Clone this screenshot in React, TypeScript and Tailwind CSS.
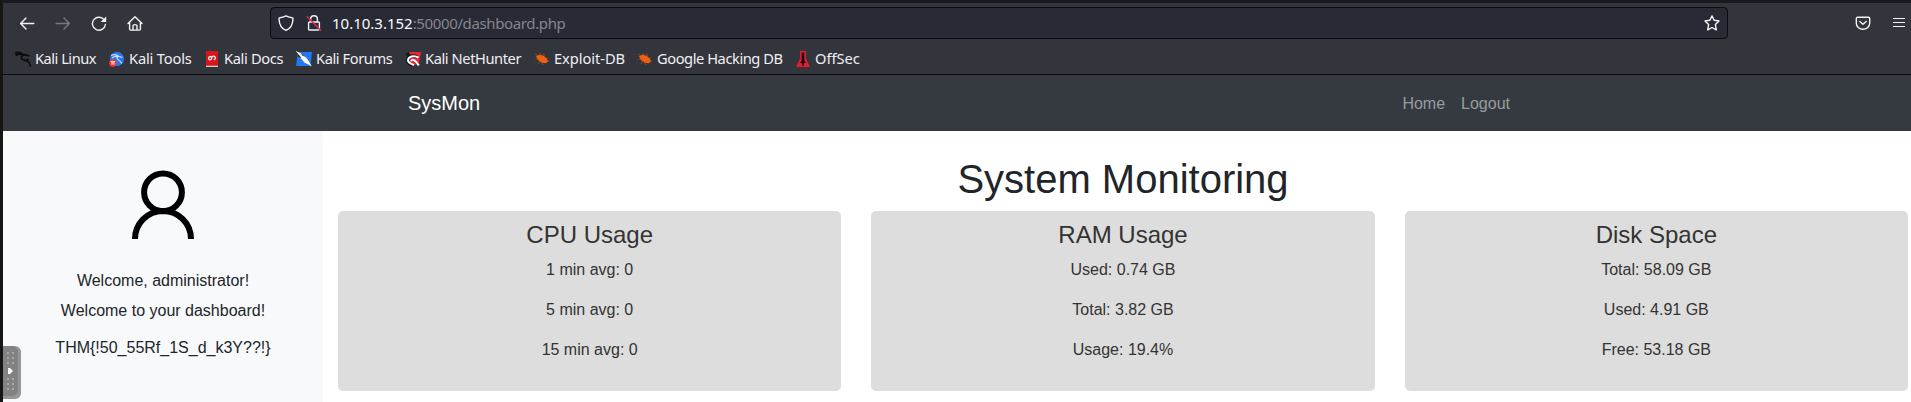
import React from "react";

const stroke = { fill: "none", stroke: "#f2f2f4", strokeWidth: 1.4, strokeLinecap: "round", strokeLinejoin: "round" } as const;

function BackIcon() {
  return (
    <svg className="h-4 w-4" viewBox="0 -0.5 16 16" {...stroke}>
      <path d="M14.8 8H1.6M7 2.6 1.6 8 7 13.4" />
    </svg>
  );
}

function ForwardIcon() {
  return (
    <svg className="h-4 w-4" viewBox="0 -0.5 16 16" {...stroke} stroke="#77797f">
      <path d="M1.2 8h13.2M9 2.6 14.4 8 9 13.4" />
    </svg>
  );
}

function ReloadIcon() {
  return (
    <svg className="h-4 w-4" viewBox="0 -0.5 16 16" {...stroke}>
      <path d="M13.5 4.800A6.500 6.500 0 1 0 14.400 9" />
      <path d="M15.200 1v5.500H9.700z" fill="#f2f2f4" stroke="none" />
    </svg>
  );
}

function HomeIcon() {
  return (
    <svg className="h-4 w-4" viewBox="0 -0.5 16 16" {...stroke}>
      <path d="M1 8 8 1.2 15 8M2.6 6.800v6.800q0 1 1 1h8.800q1 0 1-1V6.800M6 14.500v-4.200q0-1.200 2-1.200t2 1.200v4.200" />
    </svg>
  );
}

function ShieldIcon() {
  return (
    <svg className="h-4 w-4" viewBox="0 0 16 16" {...stroke}>
      <path d="M8 .9c2 1 4.200 1.700 6.200 1.900.500 0 .800.400.800.900C14.800 9.500 12.600 13.600 8 15.400 3.400 13.600 1.200 9.500 1 3.700c0-.5.300-.9.800-.9C3.800 2.600 6 1.900 8 .9z" />
    </svg>
  );
}

function InsecureIcon() {
  return (
    <svg className="h-4 w-4" viewBox="0 0 16 16" {...stroke}>
      <path d="M4.600 7V4.200a3.400 3.400 0 0 1 6.800 0V7M3.600 7h8.800q1 0 1 1v6q0 1-1 1H3.600q-1 0-1-1V8q0-1 1-1z" />
      <path d="M1.200 1.700 14.600 15.300" stroke="#e22850" strokeWidth="1.500" />
    </svg>
  );
}

function StarIcon() {
  return (
    <svg className="h-4 w-4" viewBox="0 0 16 16" {...stroke}>
      <path d="M8 .9 10.100 5.300 15 6 11.400 9.600 12.300 14.900 8 12.500 3.700 14.900 4.600 9.600 1 6 5.900 5.300z" />
    </svg>
  );
}

function PocketIcon() {
  return (
    <svg className="h-4 w-4" viewBox="0 0 16 16" {...stroke}>
      <path d="M2.600 2.300h10.800q1.300 0 1.300 1.300V8a6.700 6.300 0 0 1-13.400 0V3.600Q1.300 2.300 2.600 2.300zM4.800 6.400 8 9.300l3.200-2.900" />
    </svg>
  );
}

function MenuIcon() {
  return (
    <svg className="h-4 w-3" viewBox="0 0 12 16" shapeRendering="crispEdges" fill="#f2f2f4">
      <path d="M0 3h12v1H0zM0 7h12v1H0zM0 11h12v1H0z" />
    </svg>
  );
}

function DragonIcon() {
  return (
    <svg className="h-4 w-4" viewBox="0 0 16 16" fill="none" stroke="#0b0b0d" strokeLinecap="round">
      <path d="M.7 1.300C4 .9 7 2 9 4.100M1 4.500C3.500 2.700 6 3 8.500 4M.8 3 4 2.500" strokeWidth="1.300" />
      <path d="M8.500 3.800 10.300 3.600 13.500 4.800M8.500 4.200C5.500 5.200 5.600 8.200 8.600 8.900 12.500 9.700 14.500 10.500 15.300 14.900M10.800 9.500 12.900 8.500" strokeWidth="1.700" />
    </svg>
  );
}

function ToolsIcon() {
  return (
    <svg className="h-4 w-4" viewBox="0 0 16 16" fill="none">
      <circle cx="8" cy="7.900" r="7.100" fill="#2777f2" />
      <path d="M2 4.500C5 3 8 3.800 10 5.500L13.500 6.300M3 7C6 4.500 8 5.500 9.500 6M8.300 6.300C6.800 8.300 11 8.700 12.800 12.600" stroke="#cfe0fb" strokeWidth="1.200" />
      <circle cx="3.900" cy="12" r="3.700" fill="#f23b36" />
      <path d="M1.800 10.700h4.200M3.100 10.700v3M4.900 10.700v3" stroke="#fff" strokeWidth=".9" />
    </svg>
  );
}

function DocsIcon() {
  return (
    <svg className="h-4 w-4" viewBox="0 0 16 16" fill="none">
      <path d="M2 0h12v16H2z" fill="#d9141c" />
      <path d="M2 14.700h12V16H2z" fill="#d7c9c9" />
      <path d="M6.300 5.200C3.800 6 4.300 9.300 6.300 8.900 8.300 8.500 7 5.500 9 5.200 11.700 4.900 12.300 8 9.800 8.900M6.300 5.200 7.300 6.300" stroke="#fff" strokeWidth="1.200" />
    </svg>
  );
}

function ForumsIcon() {
  return (
    <svg className="h-4 w-4" viewBox="0 0 16 16">
      <path d="M2 1h14l-1.500 14H0z" fill="#2379f4" />
      <path d="M0 0 5 2.500 10.500 7 13 10.500 15.800 15.500 12 13.200 8.500 11.800 6 8.500 2 5z" fill="#fff" />
      <path d="M0 .5 5.500 7 2.500 6.200zM6 4.200l3 1.600-3.800-3.600z" fill="#16181d" />
    </svg>
  );
}

function NetHunterIcon() {
  return (
    <svg className="h-4 w-4" viewBox="0 0 16 16" fill="none">
      <path d="M4 1h12l-2.200 12.500H5z" fill="#ee2532" />
      <path d="M2 2 5 6M12 5.700C7 4 2.600 6 2.600 9.300c0 2.700 2.500 4.200 4.600 4.500" stroke="#16181d" strokeWidth="3.600" />
      <path d="M13.500 6.600C9 3.800 3.300 5.600 3 9c-.2 3 4 3.900 6 5.300M6 10C7.500 7.600 10.200 8.500 13.800 14.500" stroke="#fff" strokeWidth="2" />
    </svg>
  );
}

function BugIcon() {
  return (
    <svg className="h-4 w-4" viewBox="0 0 16 16" fill="none">
      <path d="M1 3 4 5M6 2l1 3M10 2.500v3M14 7l-3 1M15 10h-4M4 13l2-3M9 14l-1-3M1.500 8H5" stroke="#a64b20" strokeWidth=".8" />
      <path d="M2 5.300 5.300 3.800 9.500 4.800 12.500 7.300 14 10.200 12 12.300 7.800 11.700 4 9z" fill="#f1600f" />
    </svg>
  );
}

function OffSecIcon() {
  return (
    <svg className="h-4 w-4" viewBox="0 0 16 16">
      <path d="M5 0h6v7.500L15 16H1l4-8.500z" fill="#e31e2a" />
      <path d="M6.600 1.500h2.800V10L11 11.500 8.700 12.500V15H7.300v-2.500L5 11.500 6.600 10z" fill="#220b11" />
    </svg>
  );
}

const bookmarks = [
  { label: "Kali Linux", icon: DragonIcon, width: "w-[94px]", tracking: "tracking-[-0.5px]" },
  { label: "Kali Tools", icon: ToolsIcon, width: "w-[95px]", tracking: "tracking-[-0.16px]" },
  { label: "Kali Docs", icon: DocsIcon, width: "w-[92px]", tracking: "tracking-[-0.35px]" },
  { label: "Kali Forums", icon: ForumsIcon, width: "w-[109px]", tracking: "tracking-[-0.42px]" },
  { label: "Kali NetHunter", icon: NetHunterIcon, width: "w-[129px]", tracking: "tracking-[-0.42px]" },
  { label: "Exploit-DB", icon: BugIcon, width: "w-[103px]", tracking: "tracking-[-0.05px]" },
  { label: "Google Hacking DB", icon: BugIcon, width: "w-[158px]", tracking: "tracking-[-0.44px]" },
  { label: "OffSec", icon: OffSecIcon, width: "w-[70px]", tracking: "tracking-normal" },
];

const cards = [
  { title: "CPU Usage", lines: ["1 min avg: 0", "5 min avg: 0", "15 min avg: 0"] },
  { title: "RAM Usage", lines: ["Used: 0.74 GB", "Total: 3.82 GB", "Usage: 19.4%"] },
  { title: "Disk Space", lines: ["Total: 58.09 GB", "Used: 4.91 GB", "Free: 53.18 GB"] },
];

function BrowserChrome() {
  return (
    <header className="h-[72px] border-b border-[#0c0c0f] bg-[#33353d] font-['Noto_Sans',sans-serif] text-[#f0f0f3]">
      <div className="flex h-10 items-center">
        <div className="flex w-[267px] gap-5 pl-4">
          <BackIcon />
          <ForwardIcon />
          <ReloadIcon />
          <HomeIcon />
        </div>
        <div className="flex h-8 w-[1458px] items-center rounded border border-[#0c0c0f] bg-[#282a36] pr-[7px] pl-[7px]">
          <ShieldIcon />
          <span className="ml-3">
            <InsecureIcon />
          </span>
          <span className="ml-[10px] flex-1 text-[15px] leading-5 tracking-[-0.37px] text-[#84858d]">
            <span className="tracking-normal text-[#fbfbfe]">10.10.3.152</span>:50000/dashboard.php
          </span>
          <StarIcon />
        </div>
        <div className="ml-[127px] flex items-center gap-[22px]">
          <PocketIcon />
          <MenuIcon />
        </div>
      </div>
      <nav className="flex h-8 items-center pl-3">
        {bookmarks.map(({ label, icon: Icon, width, tracking }) => (
          <a key={label} className={`flex shrink-0 items-center gap-1 text-[14.67px] leading-5 whitespace-nowrap ${width}`}>
            <Icon />
            <span className={`pb-0.5 ${tracking}`}>{label}</span>
          </a>
        ))}
      </nav>
    </header>
  );
}

function ControlHandle() {
  return (
    <div className="absolute top-[343px] left-0 h-[53px] w-[18px] rounded-r-md bg-[#979797]">
      <div className="h-[50px] w-[15px] rounded-r-md bg-[#828282]">
        <svg className="h-[50px] w-[15px]" viewBox="0 0 15 50">
          {[6, 11, 16, 32, 37, 42].map((y) => (
            <path key={y} d={`M4 ${y}h2v2H4zM9 ${y}h2v2H9z`} fill="#a7a7a7" />
          ))}
          <path d="M5 22h2l3 3-3 3H5z" fill="#fff" />
        </svg>
      </div>
    </div>
  );
}

export default function App() {
  return (
    <div className="relative h-[402px] w-[1911px] overflow-hidden border-t-[3px] border-l-[3px] border-t-[#191a1f] border-l-[#151515] bg-white font-['Liberation_Sans',Arial,sans-serif] text-base leading-6 text-[#212529]">
      <BrowserChrome />
      <nav className="flex h-14 items-center justify-between bg-[#343a40] pr-[401px] pl-[405px]">
        <a className="text-xl text-white">SysMon</a>
        <div className="flex gap-4 pt-0.5 text-[#999c9f]">
          <a>Home</a>
          <a>Logout</a>
        </div>
      </nav>
      <div className="flex h-[271px]">
        <aside className="flex w-80 shrink-0 flex-col items-center bg-[#f8f9fa] pt-[39px]">
          <svg className="h-[69px] w-16" viewBox="0 0 64 69" fill="none" stroke="#000" strokeWidth="6">
            <circle cx="32" cy="22.300" r="18.900" />
            <path d="M4 69A28 28 0 0 1 60 69" />
          </svg>
          <p className="mt-[30px]">Welcome, administrator!</p>
          <p className="mt-1.5">Welcome to your dashboard!</p>
          <p className="mt-[13px]">THM&#123;!50_55Rf_1S_d_k3Y??!&#125;</p>
        </aside>
        <main className="w-[1600px] shrink-0 px-[15px] pt-6 text-center">
          <h1 className="mb-2 text-[40px] leading-12">System Monitoring</h1>
          <div className="grid grid-cols-3 gap-[30px] text-[#333]">
            {cards.map((card) => (
              <section key={card.title} className="h-[180px] rounded-[5px] bg-[#ddd] pt-[9px]">
                <h2 className="mb-[9px] text-2xl leading-[29px]">{card.title}</h2>
                <div className="flex flex-col gap-4">
                  {card.lines.map((line) => (
                    <p key={line}>{line}</p>
                  ))}
                </div>
              </section>
            ))}
          </div>
        </main>
      </div>
      <ControlHandle />
    </div>
  );
}
